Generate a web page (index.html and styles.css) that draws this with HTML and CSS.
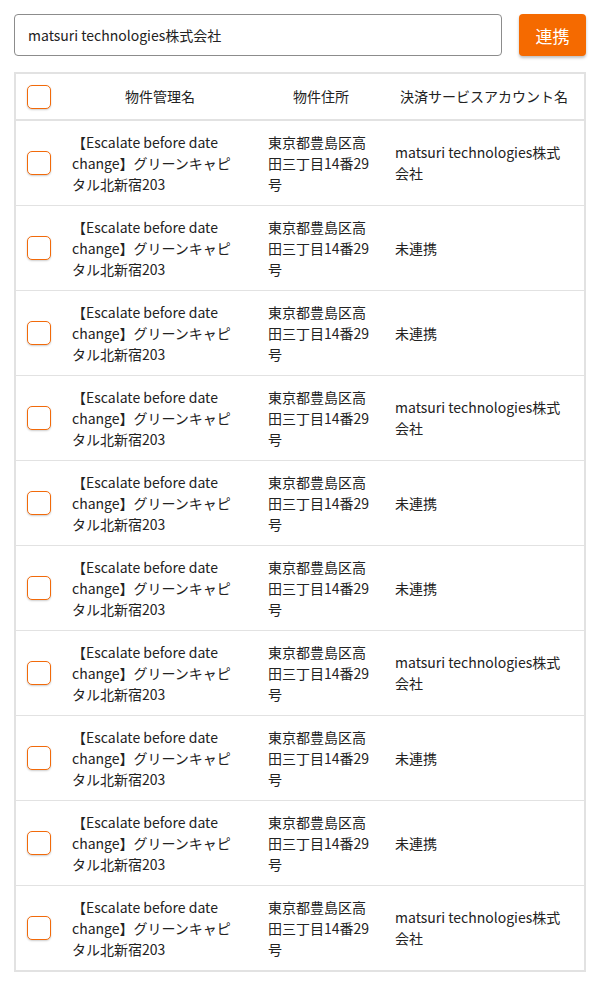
FILE: index.html
```html
<!DOCTYPE html>
<html lang="ja">
<head>
<meta charset="utf-8">
<link rel="stylesheet" href="styles.css">
</head>
<body>
<div class="page">
  <div class="toolbar">
    <div class="field">matsuri technologies株式会社</div>
    <button class="btn">連携</button>
  </div>
  <div class="table-wrap">
    <table class="tbl">
      <colgroup>
        <col class="c1"><col class="c2"><col class="c3"><col class="c4">
      </colgroup>
      <thead>
        <tr>
          <th class="chk"><span class="box"></span></th>
          <th>物件管理名</th>
          <th>物件住所</th>
          <th>決済サービスアカウント名</th>
        </tr>
      </thead>
      <tbody>
        <tr><td class="chk"><span class="box"></span></td><td class="name">【Escalate before date change】グリーンキャピタル北新宿203</td><td>東京都豊島区高田三丁目14番29号</td><td class="acct">matsuri technologies株式会社</td></tr>
        <tr><td class="chk"><span class="box"></span></td><td class="name">【Escalate before date change】グリーンキャピタル北新宿203</td><td>東京都豊島区高田三丁目14番29号</td><td class="acct">未連携</td></tr>
        <tr><td class="chk"><span class="box"></span></td><td class="name">【Escalate before date change】グリーンキャピタル北新宿203</td><td>東京都豊島区高田三丁目14番29号</td><td class="acct">未連携</td></tr>
        <tr><td class="chk"><span class="box"></span></td><td class="name">【Escalate before date change】グリーンキャピタル北新宿203</td><td>東京都豊島区高田三丁目14番29号</td><td class="acct">matsuri technologies株式会社</td></tr>
        <tr><td class="chk"><span class="box"></span></td><td class="name">【Escalate before date change】グリーンキャピタル北新宿203</td><td>東京都豊島区高田三丁目14番29号</td><td class="acct">未連携</td></tr>
        <tr><td class="chk"><span class="box"></span></td><td class="name">【Escalate before date change】グリーンキャピタル北新宿203</td><td>東京都豊島区高田三丁目14番29号</td><td class="acct">未連携</td></tr>
        <tr><td class="chk"><span class="box"></span></td><td class="name">【Escalate before date change】グリーンキャピタル北新宿203</td><td>東京都豊島区高田三丁目14番29号</td><td class="acct">matsuri technologies株式会社</td></tr>
        <tr><td class="chk"><span class="box"></span></td><td class="name">【Escalate before date change】グリーンキャピタル北新宿203</td><td>東京都豊島区高田三丁目14番29号</td><td class="acct">未連携</td></tr>
        <tr><td class="chk"><span class="box"></span></td><td class="name">【Escalate before date change】グリーンキャピタル北新宿203</td><td>東京都豊島区高田三丁目14番29号</td><td class="acct">未連携</td></tr>
        <tr><td class="chk"><span class="box"></span></td><td class="name">【Escalate before date change】グリーンキャピタル北新宿203</td><td>東京都豊島区高田三丁目14番29号</td><td class="acct">matsuri technologies株式会社</td></tr>
      </tbody>
    </table>
  </div>
</div>
</body>
</html>
```
FILE: styles.css
```css
* { box-sizing: border-box; }
html, body { margin: 0; padding: 0; background: #fff; }
body {
  font-family: "Noto Sans CJK JP", "Noto Sans", sans-serif;
  font-size: 14px;
  line-height: 21px;
  color: #222;
}
.page { padding: 14px 14px 0 14px; width: 600px; }
.toolbar { display: flex; gap: 17px; height: 42px; }
.field {
  flex: 1;
  border: 1px solid #8c8c8c;
  border-radius: 4px;
  padding: 0 13px;
  display: flex;
  align-items: center;
  font-size: 14px;
  color: #222;
}
.btn {
  width: 67px;
  border: none;
  border-radius: 4px;
  background: #f56a00;
  color: #fff;
  font-family: inherit;
  font-size: 17px;
  box-shadow: 0 2px 3px rgba(0,0,0,0.25);
  padding: 0;
}
.table-wrap {
  margin-top: 16px;
  width: 572px;
  border: 2px solid #e2e2e2;
}
.tbl {
  width: 100%;
  table-layout: fixed;
  border-collapse: separate;
  border-spacing: 0;
}
.c1 { width: 46px; }
.c2 { width: 196px; }
.c3 { width: 126px; }
.c4 { width: 200px; }
.tbl th {
  font-weight: normal;
  height: 47px;
  padding: 0 8px;
  border-bottom: 2px solid #e2e2e2;
  text-align: center;
  vertical-align: middle;
}
.tbl td {
  height: 85px;
  padding: 0 10px;
  border-bottom: 1px solid #e2e2e2;
  vertical-align: middle;
  text-align: left;
}
.tbl td.name { padding-right: 20px; }
.tbl td.acct { padding-left: 11px; padding-right: 16px; }
.tbl tbody tr:last-child td { border-bottom: none; height: 84px; }
.tbl .chk { padding: 0 0 0 11px; text-align: left; }
.box {
  display: block;
  width: 24px;
  height: 24px;
  border: 1.5px solid #f26a0a;
  border-radius: 5px;
  background: #fff;
  box-shadow: 0 1px 2px rgba(0,0,0,0.2);
}
```
